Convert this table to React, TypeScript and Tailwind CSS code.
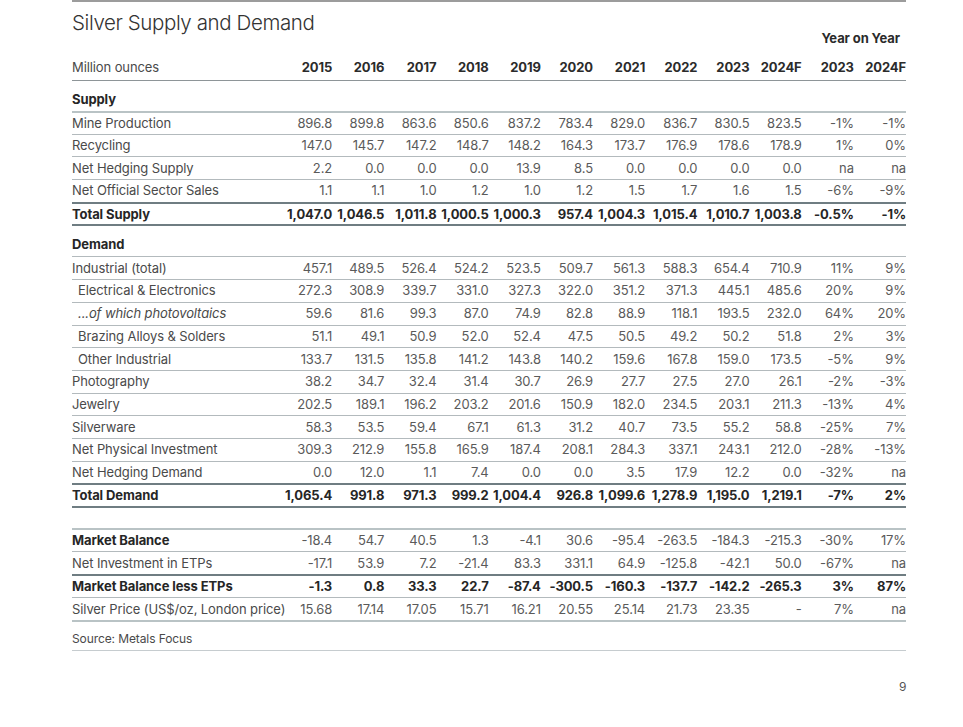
import React from "react";

type Row = {
  label: string;
  values?: string[];
  kind?: "normal" | "bold" | "total" | "section" | "sub" | "italic";
  topLine?: "thin" | "thick" | "dark" | "none";
};

const rows: Row[] = [
  { label: "Mine Production", values: ["896.8", "899.8", "863.6", "850.6", "837.2", "783.4", "829.0", "836.7", "830.5", "823.5", "-1%", "-1%"], topLine: "thick" },
  { label: "Recycling", values: ["147.0", "145.7", "147.2", "148.7", "148.2", "164.3", "173.7", "176.9", "178.6", "178.9", "1%", "0%"] },
  { label: "Net Hedging Supply", values: ["2.2", "0.0", "0.0", "0.0", "13.9", "8.5", "0.0", "0.0", "0.0", "0.0", "na", "na"] },
  { label: "Net Official Sector Sales", values: ["1.1", "1.1", "1.0", "1.2", "1.0", "1.2", "1.5", "1.7", "1.6", "1.5", "-6%", "-9%"] },
  { label: "Total Supply", values: ["1,047.0", "1,046.5", "1,011.8", "1,000.5", "1,000.3", "957.4", "1,004.3", "1,015.4", "1,010.7", "1,003.8", "-0.5%", "-1%"], kind: "total", topLine: "dark" },
];

const demand: Row[] = [
  { label: "Industrial (total)", values: ["457.1", "489.5", "526.4", "524.2", "523.5", "509.7", "561.3", "588.3", "654.4", "710.9", "11%", "9%"], topLine: "thin" },
  { label: "Electrical & Electronics", values: ["272.3", "308.9", "339.7", "331.0", "327.3", "322.0", "351.2", "371.3", "445.1", "485.6", "20%", "9%"], kind: "sub" },
  { label: "...of which photovoltaics", values: ["59.6", "81.6", "99.3", "87.0", "74.9", "82.8", "88.9", "118.1", "193.5", "232.0", "64%", "20%"], kind: "italic" },
  { label: "Brazing Alloys & Solders", values: ["51.1", "49.1", "50.9", "52.0", "52.4", "47.5", "50.5", "49.2", "50.2", "51.8", "2%", "3%"], kind: "sub" },
  { label: "Other Industrial", values: ["133.7", "131.5", "135.8", "141.2", "143.8", "140.2", "159.6", "167.8", "159.0", "173.5", "-5%", "9%"], kind: "sub" },
  { label: "Photography", values: ["38.2", "34.7", "32.4", "31.4", "30.7", "26.9", "27.7", "27.5", "27.0", "26.1", "-2%", "-3%"] },
  { label: "Jewelry", values: ["202.5", "189.1", "196.2", "203.2", "201.6", "150.9", "182.0", "234.5", "203.1", "211.3", "-13%", "4%"] },
  { label: "Silverware", values: ["58.3", "53.5", "59.4", "67.1", "61.3", "31.2", "40.7", "73.5", "55.2", "58.8", "-25%", "7%"] },
  { label: "Net Physical Investment", values: ["309.3", "212.9", "155.8", "165.9", "187.4", "208.1", "284.3", "337.1", "243.1", "212.0", "-28%", "-13%"] },
  { label: "Net Hedging Demand", values: ["0.0", "12.0", "1.1", "7.4", "0.0", "0.0", "3.5", "17.9", "12.2", "0.0", "-32%", "na"] },
  { label: "Total Demand", values: ["1,065.4", "991.8", "971.3", "999.2", "1,004.4", "926.8", "1,099.6", "1,278.9", "1,195.0", "1,219.1", "-7%", "2%"], kind: "total", topLine: "dark" },
];

const balance: Row[] = [
  { label: "Market Balance", values: ["-18.4", "54.7", "40.5", "1.3", "-4.1", "30.6", "-95.4", "-263.5", "-184.3", "-215.3", "-30%", "17%"], kind: "bold", topLine: "thick" },
  { label: "Net Investment in ETPs", values: ["-17.1", "53.9", "7.2", "-21.4", "83.3", "331.1", "64.9", "-125.8", "-42.1", "50.0", "-67%", "na"] },
  { label: "Market Balance less ETPs", values: ["-1.3", "0.8", "33.3", "22.7", "-87.4", "-300.5", "-160.3", "-137.7", "-142.2", "-265.3", "3%", "87%"], kind: "total", topLine: "dark" },
  { label: "Silver Price (US$/oz, London price)", values: ["15.68", "17.14", "17.05", "15.71", "16.21", "20.55", "25.14", "21.73", "23.35", "-", "7%", "na"] },
];

const years = ["2015", "2016", "2017", "2018", "2019", "2020", "2021", "2022", "2023", "2024F", "2023", "2024F"];

const grid = "grid grid-cols-[208px_repeat(12,minmax(0,1fr))]";

function lineClass(t?: Row["topLine"]) {
  switch (t) {
    case "thick":
      return "border-t-2 border-[#b9c3c5]";
    case "dark":
      return "border-t-2 border-[#6f7d82]";
    case "none":
      return "";
    default:
      return "border-t border-[#b3babd]";
  }
}

function DataRow({ r, tall }: { r: Row; tall?: boolean }) {
  const labelCls =
    r.kind === "total" || r.kind === "bold"
      ? "font-bold text-[#262626]"
      : r.kind === "sub"
      ? "pl-[6px] text-[#4a4a4a]"
      : r.kind === "italic"
      ? "pl-[6px] italic text-[#4a4a4a]"
      : "text-[#4a4a4a]";
  const valCls = r.kind === "total" ? "font-bold text-[#262626]" : "text-[#5a5a5a]";
  return (
    <div className={`${grid} ${tall ? "h-[23px]" : "h-[22.7px]"} items-center ${lineClass(r.topLine)}`}>
      <div className={`whitespace-nowrap ${labelCls}`}>{r.label}</div>
      {r.values?.map((v, i) => (
        <div key={i} className={`text-right whitespace-nowrap ${valCls}`}>
          {v}
        </div>
      ))}
    </div>
  );
}

export default function App() {
  return (
    <div
      className="w-[963px] h-[727px] bg-white relative"
      style={{ fontFamily: "Inter, 'Noto Sans', sans-serif" }}
    >
      <div className="ml-[72px] w-[834px] text-[13px] leading-none tracking-[-0.1px]">
        <div className="border-t-2 border-[#9c9c9c]" />
        <div className="text-[20.5px] font-light text-[#333] mt-[10px] h-[22px] tracking-[-0.4px] flex items-center">
          Silver Supply and Demand
        </div>
        <div className="flex justify-end pr-[6px] -mt-[4px] font-bold text-[#2b2b2b] text-[13px] h-[16px] items-center">
          Year on Year
        </div>
        <div className={`${grid} h-[34px] items-center pt-[8px]`}>
          <div className="text-[#4a4a4a]">Million ounces</div>
          {years.map((y, i) => (
            <div key={i} className="text-right font-bold text-[#2b2b2b]">
              {y}
            </div>
          ))}
        </div>
        <div className={`${grid} h-[31px] items-end pb-[5px] border-t border-[#8e9598]`}>
          <div className="font-bold text-[#262626]">Supply</div>
        </div>
        {rows.map((r, i) => (
          <DataRow key={i} r={r} />
        ))}
        <div className={`${grid} h-[32px] items-end pb-[5px] border-t-2 border-[#6f7d82]`}>
          <div className="font-bold text-[#262626]">Demand</div>
        </div>
        {demand.map((r, i) => (
          <DataRow key={i} r={r} />
        ))}
        <div className="h-[22px] border-t-2 border-[#6f7d82]" />
        {balance.map((r, i) => (
          <DataRow key={i} r={r} tall />
        ))}
        <div className="h-[30px] border-t-2 border-[#b9c3c5] flex items-center text-[12px] text-[#4a4a4a] pt-[6px]">
          Source: Metals Focus
        </div>
        <div className="border-t border-[#c6cccf]" />
      </div>
      <div className="absolute left-[899px] top-[678px] text-[12px] text-[#555]">9</div>
    </div>
  );
}
